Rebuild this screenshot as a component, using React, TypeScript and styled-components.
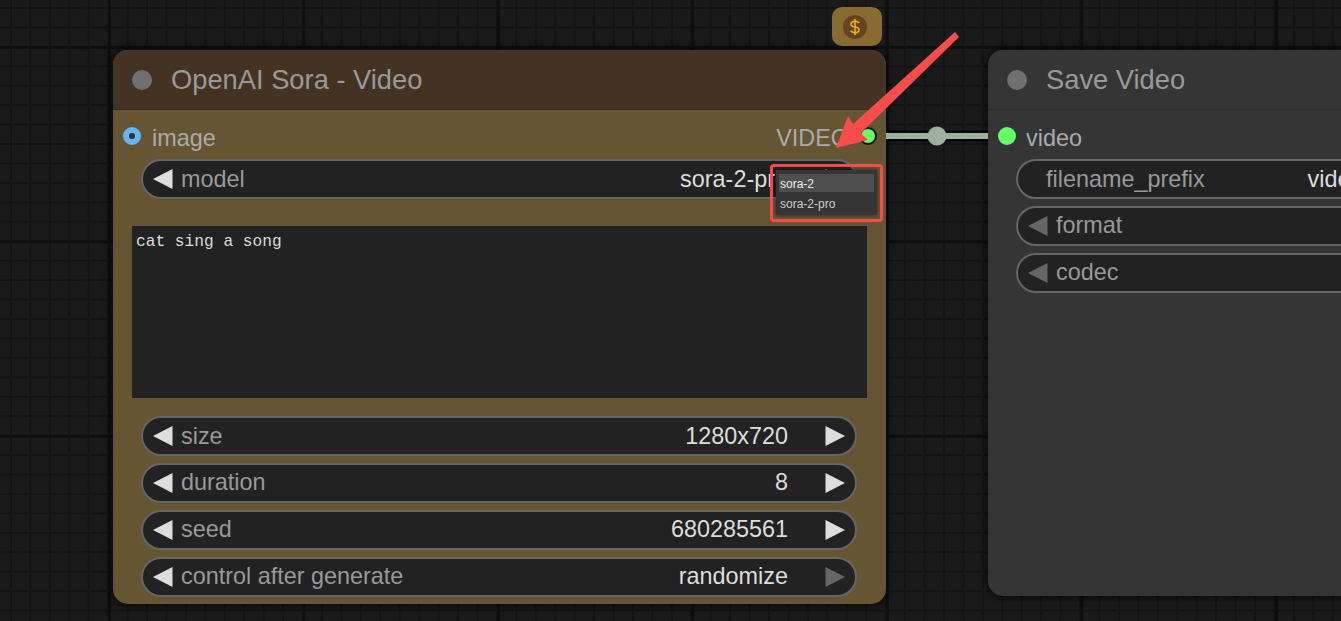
import React, { FC } from 'react';
import styled, { createGlobalStyle } from 'styled-components';

const GlobalStyle = createGlobalStyle`
  html, body {
    margin: 0;
    padding: 0;
    background: #1a1a1a;
    overflow: hidden;
  }
`;

const Canvas = styled.div`
  position: relative;
  width: 1341px;
  height: 621px;
  overflow: hidden;
  font-family: "Liberation Sans", Arial, sans-serif;
  background-color: #1a1a1a;
  background-image:
    linear-gradient(#0e0e0e 3px, transparent 3px),
    linear-gradient(90deg, #0e0e0e 3px, transparent 3px),
    linear-gradient(#131313 2px, transparent 2px),
    linear-gradient(90deg, #131313 2px, transparent 2px);
  background-size: 194.5px 194.5px, 194.5px 194.5px, 19.45px 19.45px, 19.45px 19.45px;
  background-position: 108px 46px, 108px 46px, 10px 7px, 10px 7px;
`;

const Node = styled.section<{ $left: number; $width: number; $height: number; $bg: string }>`
  position: absolute;
  left: ${p => p.$left}px;
  top: 50px;
  width: ${p => p.$width}px;
  height: ${p => p.$height}px;
  background: ${p => p.$bg};
  border-radius: 15px;
  box-shadow: 0 0 6px 3px rgba(0, 0, 0, 0.5);
  display: flex;
  flex-direction: column;
`;

const TitleBar = styled.header<{ $bg: string }>`
  height: 60px;
  flex: none;
  box-sizing: border-box;
  display: flex;
  align-items: center;
  gap: 19px;
  padding-left: 19px;
  background: ${p => p.$bg};
  border-radius: 15px 15px 0 0;
  border-bottom: 1px solid rgba(0, 0, 0, 0.15);
`;

const TitleDot = styled.span`
  width: 20px;
  height: 20px;
  border-radius: 50%;
  background: #6f6f6f;
`;

const TitleText = styled.h2`
  margin: 0;
  font-size: 27.3px;
  font-weight: 400;
  color: #999;
`;

const Body = styled.div`
  flex: 1;
  display: flex;
  flex-direction: column;
  padding-top: 13px;
`;

const SlotRow = styled.div`
  height: 29px;
  flex: none;
  display: flex;
  align-items: center;
  justify-content: space-between;
  margin-bottom: 7px;
  padding: 0 9px 0 10px;
  font-size: 23.4px;
  color: #aaa;
`;

const SlotSide = styled.div<{ $gap: number }>`
  display: flex;
  align-items: center;
  gap: ${p => p.$gap}px;
`;

const SlotLabel = styled.span`
  padding-top: 2px;
`;

const SlotDot = styled.span<{ $color: string; $ring?: string; $core?: string }>`
  width: 18px;
  height: 18px;
  box-sizing: border-box;
  border-radius: 50%;
  background: ${p => p.$color};
  margin-top: -4px;
  ${p => p.$ring && `border: 2px solid ${p.$ring};`}
  display: flex;
  align-items: center;
  justify-content: center;
  &::after {
    content: "";
    width: 6px;
    height: 6px;
    border-radius: 50%;
    background: ${p => p.$core || 'transparent'};
  }
`;

const Widgets = styled.div`
  display: flex;
  flex-direction: column;
  gap: 6.9px;
  padding: 0 29px 0 28px;
`;

const Widget = styled.div`
  height: 40px;
  box-sizing: border-box;
  display: flex;
  align-items: center;
  border: 2px solid #666;
  border-radius: 20px;
  background: #222;
  font-size: 23.4px;
  padding: 0 10px;
`;

const Label = styled.span<{ $indent?: boolean }>`
  color: #999;
  margin-left: ${p => (p.$indent ? 18 : 8)}px;
  white-space: nowrap;
`;

const Value = styled.span<{ $noArrow?: boolean }>`
  margin-left: auto;
  margin-right: ${p => (p.$noArrow ? 48 : 37)}px;
  color: #ddd;
  white-space: nowrap;
`;

const Arrow = styled.svg<{ $flip?: boolean }>`
  width: 20px;
  height: 20px;
  flex: none;
  transform: ${p => (p.$flip ? 'scaleX(-1)' : 'none')};
`;

const PromptBox = styled.div`
  height: 172px;
  margin: 27px 19px 18px;
  background: #222;
  color: #ddd;
  font-family: "Liberation Mono", monospace;
  font-size: 16.2px;
  line-height: 19px;
  padding: 7px 4px;
  box-sizing: border-box;
`;

const CostBadge = styled.div`
  position: absolute;
  left: 832px;
  top: 7px;
  width: 50px;
  height: 39px;
  border-radius: 10px;
  background: #896a32;
  display: flex;
  align-items: center;
  justify-content: center;
`;

const CostCoin = styled.span`
  width: 24px;
  height: 24px;
  margin-left: -5px;
  border-radius: 50%;
  background: #644520;
  display: flex;
  align-items: center;
  justify-content: center;
`;

const Overlay = styled.svg`
  position: absolute;
  left: 0;
  top: 0;
  pointer-events: none;
`;

const PickerFrame = styled.div`
  position: absolute;
  left: 770px;
  top: 164px;
  width: 113px;
  height: 58px;
  box-sizing: border-box;
  border: 3px solid #f74c4c;
  border-radius: 4px;
  padding: 3px 3px;
`;

const Picker = styled.ul`
  list-style: none;
  margin: 0;
  padding: 4px 3px;
  height: 45px;
  box-sizing: border-box;
  background: #353535;
  box-shadow: 0 0 4px rgba(0, 0, 0, 0.6);
  font-size: 12px;
`;

const PickerItem = styled.li<{ $active?: boolean }>`
  height: 18px;
  line-height: 20px;
  margin-bottom: 2px;
  padding-left: 1px;
  background: ${p => (p.$active ? '#4f4f4f' : 'transparent')};
  color: ${p => (p.$active ? '#eee' : '#ccc')};
`;

const Tri: FC<{ flip?: boolean; dim?: boolean; color?: string }> = ({ flip, dim, color }) => (
  <Arrow $flip={flip} viewBox="0 0 20 20">
    <polygon points="0,10 19.500,0 19.500,20" fill={color || (dim ? '#666' : '#ddd')} />
  </Arrow>
);

const Row: FC<{ label: string; value: string; dimRight?: boolean }> = ({ label, value, dimRight }) => (
  <Widget>
    <Tri />
    <Label>{label}</Label>
    <Value>{value}</Value>
    <Tri flip dim={dimRight} />
  </Widget>
);

const App: FC = () => (
  <Canvas>
    <GlobalStyle />

    <Node $left={113} $width={773} $height={554} $bg="#665533">
      <TitleBar $bg="#443322">
        <TitleDot />
        <TitleText>OpenAI Sora - Video</TitleText>
      </TitleBar>
      <Body>
        <SlotRow>
          <SlotSide $gap={11}>
            <SlotDot $color="#64b5f6" $core="#333" />
            <SlotLabel>image</SlotLabel>
          </SlotSide>
          <SlotSide $gap={10}>
            <SlotLabel>VIDEO</SlotLabel>
            <SlotDot $color="#6f6" $ring="#111" />
          </SlotSide>
        </SlotRow>
        <Widgets>
          <Row label="model" value="sora-2-pro" />
        </Widgets>
        <PromptBox>cat sing a song</PromptBox>
        <Widgets>
          <Row label="size" value="1280x720" />
          <Row label="duration" value="8" />
          <Row label="seed" value="680285561" />
          <Row label="control after generate" value="randomize" dimRight />
        </Widgets>
      </Body>
    </Node>

    <Node $left={988} $width={562} $height={546} $bg="#353535">
      <TitleBar $bg="#353535">
        <TitleDot />
        <TitleText>Save Video</TitleText>
      </TitleBar>
      <Body>
        <SlotRow>
          <SlotSide $gap={10}>
            <SlotDot $color="#6f6" />
            <SlotLabel>video</SlotLabel>
          </SlotSide>
        </SlotRow>
        <Widgets>
          <Widget>
            <Label $indent>filename_prefix</Label>
            <Value $noArrow>video/ComfyUI</Value>
          </Widget>
          <Widget>
            <Tri color="#666" />
            <Label>format</Label>
            <Value>auto</Value>
            <Tri flip color="#666" />
          </Widget>
          <Widget>
            <Tri color="#666" />
            <Label>codec</Label>
            <Value>auto</Value>
            <Tri flip color="#666" />
          </Widget>
        </Widgets>
      </Body>
    </Node>

    <CostBadge>
      <CostCoin>
        <svg width="18" height="18" viewBox="0 0 18 18" fill="none" stroke="#f2b01e" strokeWidth="1.6">
          <path d="M13 5.2C12.4 4 11 3.400 9 3.400c-2.400 0-4 1.100-4 2.800 0 1.800 1.700 2.400 4 2.800s4 1 4 2.800c0 1.700-1.600 2.800-4 2.800-2 0-3.500-.7-4.100-2" />
          <path d="M9 1v16" />
        </svg>
      </CostCoin>
    </CostBadge>

    <Overlay width="1341" height="621" viewBox="0 0 1341 621">
      <line x1="886" y1="136" x2="988" y2="136" stroke="#000" strokeOpacity="0.75" strokeWidth="11" />
      <line x1="886" y1="136" x2="988" y2="136" stroke="#9db09d" strokeWidth="6" />
      <circle cx="937" cy="136" r="9.500" fill="#9db09d" />
      <polygon
        points="955,32 959,37 861,133 868,140 836,148 848,116 853,124"
        fill="#f74c4c"
      />
    </Overlay>

    <PickerFrame>
      <Picker>
        <PickerItem $active>sora-2</PickerItem>
        <PickerItem>sora-2-pro</PickerItem>
      </Picker>
    </PickerFrame>
  </Canvas>
);

export default App;
